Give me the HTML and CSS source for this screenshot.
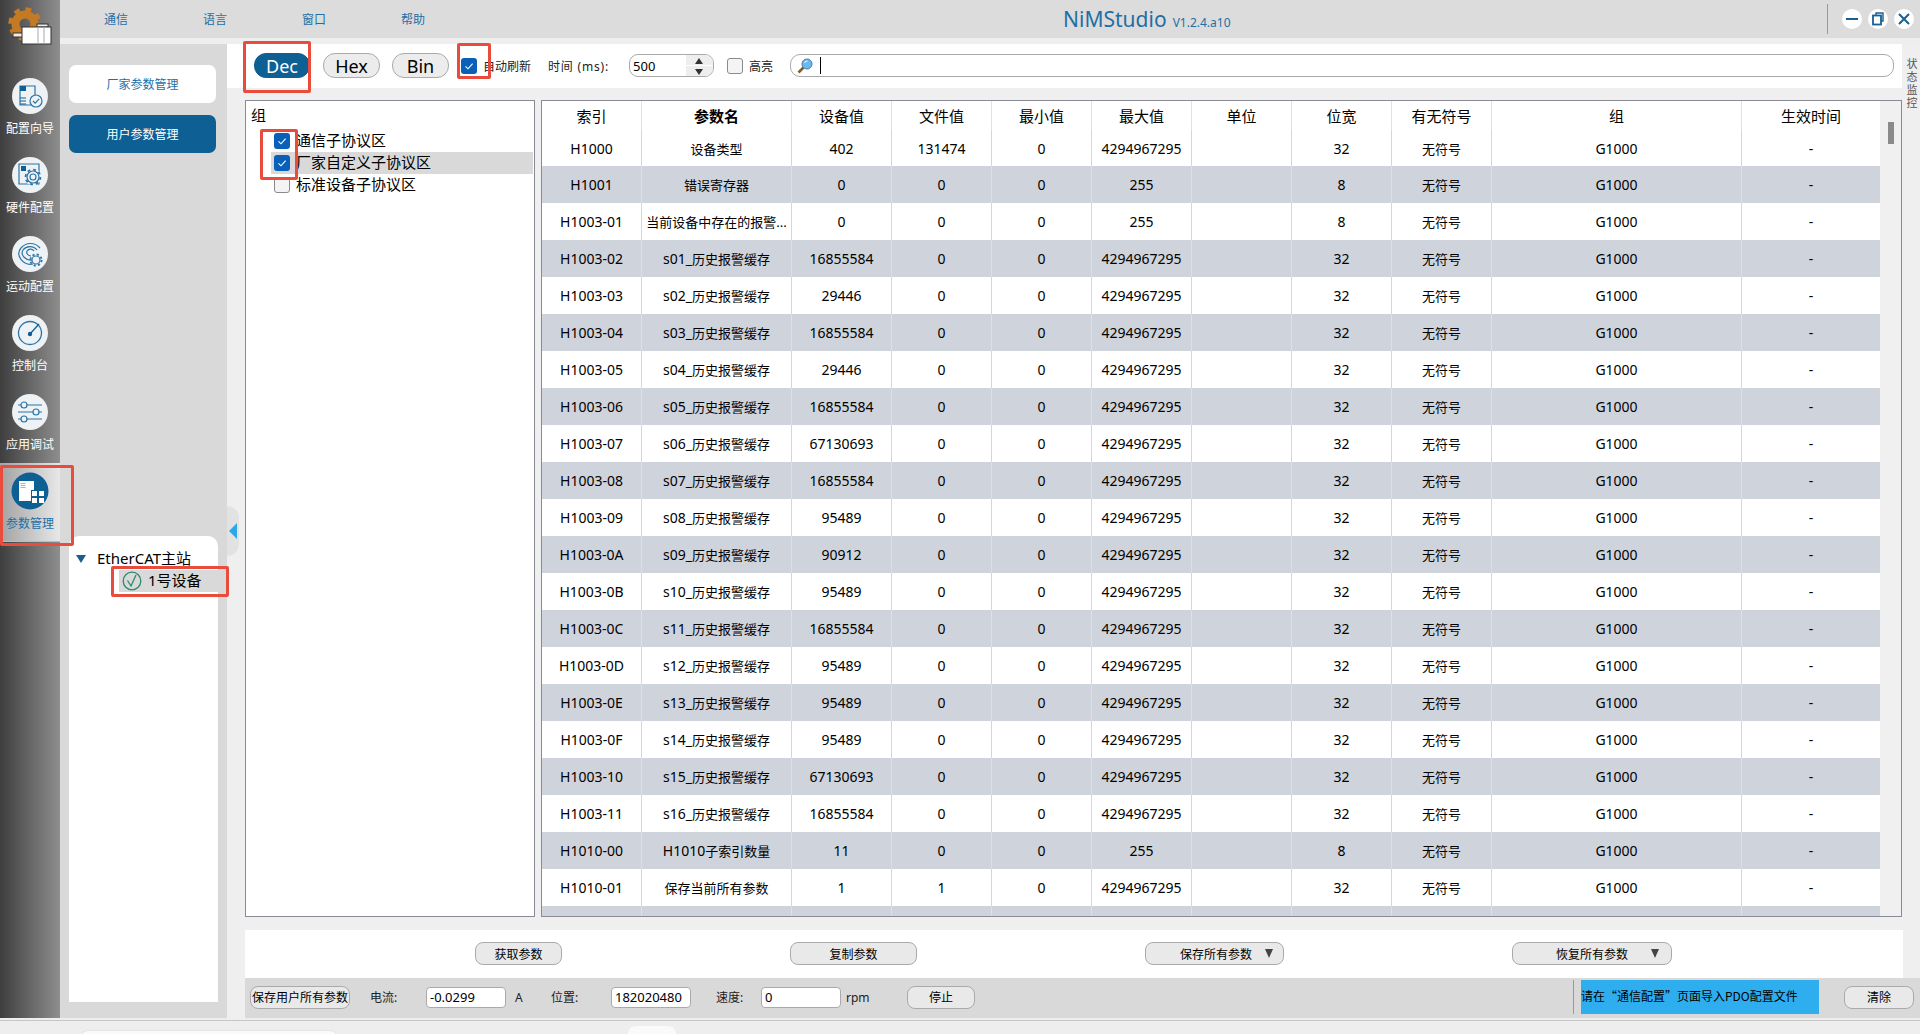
FILE: index.html
```html
<!DOCTYPE html>
<html lang="zh">
<head>
<meta charset="utf-8">
<title>NiMStudio</title>
<link rel="stylesheet" href="styles.css">
</head>
<body>
<svg class="defs" width="0" height="0">
  <symbol id="tick" viewBox="0 0 16 16"><path d="M4.500 8.400 7 10.800 11.600 5.600" fill="none" stroke="#fff" stroke-width="1.100"/></symbol>
</svg>
<div class="app">
  <aside class="side">
    <div class="logo">
      <svg width="60" height="68" viewBox="0 0 60 68">
        <circle cx="25" cy="24" r="9.500" fill="none" stroke="#c47a24" stroke-width="8"/>
        <circle cx="25" cy="24" r="14.500" fill="none" stroke="#c47a24" stroke-width="4.500" stroke-dasharray="5.700 5.700"/>
        <rect x="13" y="33" width="10" height="4" fill="#eee" stroke="#333"/>
        <rect x="37" y="24" width="11" height="3" fill="#eee" stroke="#333"/>
        <rect x="22" y="27" width="29" height="17" fill="#fff" stroke="#333"/>
        <path d="M38 27V44M44 27V44" stroke="#aaa" fill="none"/>
      </svg>
    </div>
    <div class="nav">
      <svg class="nav-ic" viewBox="0 0 36 36"><circle cx="18" cy="18" r="18" fill="#eef2f5"/><path d="M8 8h15v19H8z" fill="none" stroke="#2b74a6" stroke-width="1.200"/><rect x="8" y="8" width="6" height="5" fill="#0e5f93"/><path d="M8 20h6M8 23h6M8 26h6" stroke="#0e5f93"/><circle cx="24" cy="23" r="6" fill="#eef2f5" stroke="#2b74a6" stroke-width="1.200"/><path d="M21 23l2.200 2.200 4-4.400" fill="none" stroke="#2b74a6" stroke-width="1.200"/></svg>
      <span class="nav-tx">配置向导</span>
    </div>
    <div class="nav">
      <svg class="nav-ic" viewBox="0 0 36 36"><circle cx="18" cy="18" r="18" fill="#eef2f5"/><path d="M7 7h20v20H7z" fill="none" stroke="#2b74a6" stroke-width="1.200"/><rect x="9" y="9" width="5" height="5" fill="#0e5f93"/><circle cx="21" cy="20" r="8.500" fill="#eef2f5"/><circle cx="21" cy="20" r="3" fill="none" stroke="#2b74a6" stroke-width="1.200"/><circle cx="21" cy="20" r="6" fill="none" stroke="#2b74a6" stroke-width="1.200"/><circle cx="21" cy="20" r="7.400" fill="none" stroke="#2b74a6" stroke-width="1.800" stroke-dasharray="2.800 3"/></svg>
      <span class="nav-tx">硬件配置</span>
    </div>
    <div class="nav">
      <svg class="nav-ic" viewBox="0 0 36 36"><circle cx="18" cy="18" r="18" fill="#eef2f5"/><path d="M21 28C11 30 3 19 9 12 14 6 23 6 28 12" fill="none" stroke="#2b74a6" stroke-width="1.200"/><path d="M20 24C14 25 8 19 11 14 14 10 21 9 25 14" fill="none" stroke="#2b74a6" stroke-width="1.200"/><path d="M19 20C16 20 14 17 15 15 17 12 21 13 22 15" fill="none" stroke="#2b74a6" stroke-width="1.200"/><circle cx="24" cy="24" r="4" fill="#eef2f5" stroke="#2b74a6" stroke-width="1.200"/><circle cx="24" cy="24" r="5.600" fill="none" stroke="#2b74a6" stroke-width="1.800" stroke-dasharray="2.200 2.200"/></svg>
      <span class="nav-tx">运动配置</span>
    </div>
    <div class="nav">
      <svg class="nav-ic" viewBox="0 0 36 36"><circle cx="18" cy="18" r="18" fill="#eef2f5"/><circle cx="18" cy="18" r="11.500" fill="none" stroke="#2b74a6" stroke-width="1.300"/><circle cx="18" cy="19" r="2.200" fill="#0e5f93"/><path d="M18 19 27 9" stroke="#0e5f93" stroke-width="1.300"/></svg>
      <span class="nav-tx">控制台</span>
    </div>
    <div class="nav">
      <svg class="nav-ic" viewBox="0 0 36 36"><circle cx="18" cy="18" r="18" fill="#eef2f5"/><path d="M6 11h24M6 18h24M6 25h24" stroke="#2b74a6" stroke-width="1.200"/><circle cx="12" cy="11" r="3" fill="#eef2f5" stroke="#2b74a6" stroke-width="1.200"/><circle cx="24" cy="18" r="3" fill="#eef2f5" stroke="#2b74a6" stroke-width="1.200"/><circle cx="12" cy="25" r="3" fill="#eef2f5" stroke="#2b74a6" stroke-width="1.200"/></svg>
      <span class="nav-tx">应用调试</span>
    </div>
    <div class="nav nav-on">
      <svg class="nav-ic" viewBox="0 0 36 36"><circle cx="18" cy="18" r="18.500" fill="#0e5f93"/><path d="M7 8h15v9h-3v11H7z" fill="#fff"/><path d="M8.500 10.500h5M8.500 12.500h5M8.500 14.500h5" stroke="#8fbad6"/><rect x="20" y="18" width="5" height="5" fill="#fff"/><rect x="27" y="18" width="5" height="5" fill="#fff"/><rect x="20" y="25" width="5" height="5" fill="#fff"/><rect x="27" y="25" width="5" height="5" fill="#fff"/></svg>
      <span class="nav-tx">参数管理</span>
    </div>
  </aside>
  <div class="rest">
    <header class="titlebar">
      <nav class="menu"><span>通信</span><span>语言</span><span>窗口</span><span>帮助</span></nav>
      <div class="brand"><span class="brand-name">NiMStudio</span><span class="brand-ver">V1.2.4.a10</span></div>
      <div class="winctl">
        <span class="win-sep"></span>
        <svg class="win-b" viewBox="0 0 20 20"><circle cx="10" cy="10" r="10" fill="#fff"/><path d="M4 10h12" stroke="#1a5f90" stroke-width="2"/></svg>
        <svg class="win-b" viewBox="0 0 20 20"><circle cx="10" cy="10" r="10" fill="#fff"/><path d="M8 6V4h7v8h-2" fill="none" stroke="#1a5f90" stroke-width="1.400"/><rect x="5" y="6.500" width="8" height="9" fill="none" stroke="#1a5f90" stroke-width="1.800"/></svg>
        <svg class="win-b" viewBox="0 0 20 20"><circle cx="10" cy="10" r="10" fill="#fff"/><path d="M5 5l10 10M15 5 5 15" stroke="#1a5f90" stroke-width="2"/></svg>
      </div>
    </header>
    <div class="body">
      <section class="col2">
        <div class="mode mode-light">厂家参数管理</div>
        <div class="mode mode-on">用户参数管理</div>
        <div class="handle"><span class="handle-arrow"></span></div>
        <div class="devtree">
          <div class="dev-root"><span class="dev-caret"></span><span class="up">EtherCAT主站</span></div>
          <div class="dev-item">
            <svg width="20" height="20" viewBox="0 0 20 20"><circle cx="10" cy="10" r="8.800" fill="none" stroke="#2a8a6a" stroke-width="1.300"/><path d="M5.500 9.500 9 15 14 4" fill="none" stroke="#2a8a6a" stroke-width="1.300"/></svg>
            <span class="up">1号设备</span>
          </div>
        </div>
      </section>
      <main class="main">
        <div class="toolbar">
          <button class="pill pill-on">Dec</button>
          <button class="pill">Hex</button>
          <button class="pill">Bin</button>
          <span class="cb cb-on tb-auto"><svg width="16" height="16"><use href="#tick"/></svg></span>
          <span class="tb-lbl lbl-auto">自动刷新</span>
          <span class="tb-lbl lbl-time">时间 (ms):</span>
          <div class="spin">
            <span class="spin-val">500</span>
            <span class="spin-btns"><span class="spin-up"></span><span class="spin-dn"></span></span>
          </div>
          <span class="cb tb-hi"></span>
          <span class="tb-lbl lbl-hi">高亮</span>
          <div class="search">
            <svg width="16" height="16" viewBox="0 0 16 16"><path d="M6.500 9.500 1.500 14.500" stroke="#8a5a24" stroke-width="2.600"/><circle cx="10" cy="6" r="5" fill="#6db9ee" stroke="#3d7fb0"/><path d="M7.500 5a3 3 0 0 1 3-2" fill="none" stroke="#fff"/></svg>
            <span class="caret"></span>
          </div>
        </div>
        <div class="content">
          <div class="tree">
            <div class="tree-head">组</div>
            <div class="tree-row"><span class="cb cb-on"><svg width="16" height="16"><use href="#tick"/></svg></span><span class="up">通信子协议区</span></div>
            <div class="tree-row tree-row-on"><span class="cb cb-on"><svg width="16" height="16"><use href="#tick"/></svg></span><span class="up">厂家自定义子协议区</span></div>
            <div class="tree-row"><span class="cb"></span><span class="up">标准设备子协议区</span></div>
          </div>
          <div class="grid-wrap">
            <div class="grid-clip">
            <table class="grid">
              <colgroup><col class="c100"><col class="c150"><col class="c100"><col class="c100"><col class="c100"><col class="c100"><col class="c100"><col class="c100"><col class="c100"><col class="c250"><col class="c138"></colgroup>
              <thead><tr><th>索引</th><th class="th-b">参数名</th><th>设备值</th><th>文件值</th><th>最小值</th><th>最大值</th><th>单位</th><th>位宽</th><th>有无符号</th><th>组</th><th>生效时间</th></tr></thead>
              <tbody>
                <tr><td>H1000</td><td class="cn">设备类型</td><td>402</td><td>131474</td><td>0</td><td>4294967295</td><td></td><td>32</td><td class="cn">无符号</td><td>G1000</td><td>-</td></tr>
                <tr><td>H1001</td><td class="cn">错误寄存器</td><td>0</td><td>0</td><td>0</td><td>255</td><td></td><td>8</td><td class="cn">无符号</td><td>G1000</td><td>-</td></tr>
                <tr><td>H1003-01</td><td class="cn">当前设备中存在的报警...</td><td>0</td><td>0</td><td>0</td><td>255</td><td></td><td>8</td><td class="cn">无符号</td><td>G1000</td><td>-</td></tr>
                <tr><td>H1003-02</td><td class="cn"><span class="la">s01_</span>历史报警缓存</td><td>16855584</td><td>0</td><td>0</td><td>4294967295</td><td></td><td>32</td><td class="cn">无符号</td><td>G1000</td><td>-</td></tr>
                <tr><td>H1003-03</td><td class="cn"><span class="la">s02_</span>历史报警缓存</td><td>29446</td><td>0</td><td>0</td><td>4294967295</td><td></td><td>32</td><td class="cn">无符号</td><td>G1000</td><td>-</td></tr>
                <tr><td>H1003-04</td><td class="cn"><span class="la">s03_</span>历史报警缓存</td><td>16855584</td><td>0</td><td>0</td><td>4294967295</td><td></td><td>32</td><td class="cn">无符号</td><td>G1000</td><td>-</td></tr>
                <tr><td>H1003-05</td><td class="cn"><span class="la">s04_</span>历史报警缓存</td><td>29446</td><td>0</td><td>0</td><td>4294967295</td><td></td><td>32</td><td class="cn">无符号</td><td>G1000</td><td>-</td></tr>
                <tr><td>H1003-06</td><td class="cn"><span class="la">s05_</span>历史报警缓存</td><td>16855584</td><td>0</td><td>0</td><td>4294967295</td><td></td><td>32</td><td class="cn">无符号</td><td>G1000</td><td>-</td></tr>
                <tr><td>H1003-07</td><td class="cn"><span class="la">s06_</span>历史报警缓存</td><td>67130693</td><td>0</td><td>0</td><td>4294967295</td><td></td><td>32</td><td class="cn">无符号</td><td>G1000</td><td>-</td></tr>
                <tr><td>H1003-08</td><td class="cn"><span class="la">s07_</span>历史报警缓存</td><td>16855584</td><td>0</td><td>0</td><td>4294967295</td><td></td><td>32</td><td class="cn">无符号</td><td>G1000</td><td>-</td></tr>
                <tr><td>H1003-09</td><td class="cn"><span class="la">s08_</span>历史报警缓存</td><td>95489</td><td>0</td><td>0</td><td>4294967295</td><td></td><td>32</td><td class="cn">无符号</td><td>G1000</td><td>-</td></tr>
                <tr><td>H1003-0A</td><td class="cn"><span class="la">s09_</span>历史报警缓存</td><td>90912</td><td>0</td><td>0</td><td>4294967295</td><td></td><td>32</td><td class="cn">无符号</td><td>G1000</td><td>-</td></tr>
                <tr><td>H1003-0B</td><td class="cn"><span class="la">s10_</span>历史报警缓存</td><td>95489</td><td>0</td><td>0</td><td>4294967295</td><td></td><td>32</td><td class="cn">无符号</td><td>G1000</td><td>-</td></tr>
                <tr><td>H1003-0C</td><td class="cn"><span class="la">s11_</span>历史报警缓存</td><td>16855584</td><td>0</td><td>0</td><td>4294967295</td><td></td><td>32</td><td class="cn">无符号</td><td>G1000</td><td>-</td></tr>
                <tr><td>H1003-0D</td><td class="cn"><span class="la">s12_</span>历史报警缓存</td><td>95489</td><td>0</td><td>0</td><td>4294967295</td><td></td><td>32</td><td class="cn">无符号</td><td>G1000</td><td>-</td></tr>
                <tr><td>H1003-0E</td><td class="cn"><span class="la">s13_</span>历史报警缓存</td><td>95489</td><td>0</td><td>0</td><td>4294967295</td><td></td><td>32</td><td class="cn">无符号</td><td>G1000</td><td>-</td></tr>
                <tr><td>H1003-0F</td><td class="cn"><span class="la">s14_</span>历史报警缓存</td><td>95489</td><td>0</td><td>0</td><td>4294967295</td><td></td><td>32</td><td class="cn">无符号</td><td>G1000</td><td>-</td></tr>
                <tr><td>H1003-10</td><td class="cn"><span class="la">s15_</span>历史报警缓存</td><td>67130693</td><td>0</td><td>0</td><td>4294967295</td><td></td><td>32</td><td class="cn">无符号</td><td>G1000</td><td>-</td></tr>
                <tr><td>H1003-11</td><td class="cn"><span class="la">s16_</span>历史报警缓存</td><td>16855584</td><td>0</td><td>0</td><td>4294967295</td><td></td><td>32</td><td class="cn">无符号</td><td>G1000</td><td>-</td></tr>
                <tr><td>H1010-00</td><td class="cn"><span class="la">H1010</span>子索引数量</td><td>11</td><td>0</td><td>0</td><td>255</td><td></td><td>8</td><td class="cn">无符号</td><td>G1000</td><td>-</td></tr>
                <tr><td>H1010-01</td><td class="cn">保存当前所有参数</td><td>1</td><td>1</td><td>0</td><td>4294967295</td><td></td><td>32</td><td class="cn">无符号</td><td>G1000</td><td>-</td></tr>
                <tr><td></td><td></td><td></td><td></td><td></td><td></td><td></td><td></td><td></td><td></td><td></td></tr>
              </tbody>
            </table>
            </div>
            <div class="vbar"><span class="vthumb"></span></div>
          </div>
        </div>
        <div class="actions">
          <button class="btn w-get">获取参数</button>
          <button class="btn w-copy">复制参数</button>
          <button class="btn btn-drop w-save"><span>保存所有参数</span><i class="drop"></i></button>
          <button class="btn btn-drop w-rest"><span>恢复所有参数</span><i class="drop"></i></button>
        </div>
        <div class="status">
          <button class="btn st-save">保存用户所有参数</button>
          <span class="st-l w56">电流:</span><input class="st-in" value="-0.0299" readonly><span class="st-u w36">A</span>
          <span class="st-l w60">位置:</span><input class="st-in" value="182020480" readonly>
          <span class="st-l w45">速度:</span><input class="st-in" value="0" readonly><span class="st-u w61">rpm</span>
          <button class="btn st-stop">停止</button>
          <span class="st-sep"></span>
          <div class="st-msg">请在“通信配置”页面导入PDO配置文件</div>
          <button class="btn st-clear">清除</button>
        </div>
        <div class="rail">状态监控</div>
      </main>
    </div>
  </div>
</div>
<footer class="foot"><span class="tab tab-a"></span><span class="tab tab-b"></span></footer>
<span class="mark m-side"></span>
<span class="mark m-dev"></span>
<span class="mark m-dec"></span>
<span class="mark m-auto"></span>
<span class="mark m-tree"></span>
</body>
</html>
```
FILE: styles.css
```css
* { box-sizing: border-box; }
html, body { margin: 0; padding: 0; }
html { height: 1034px; overflow: hidden; }
body {
  width: 1920px; height: 1034px; overflow: hidden; position: relative;
  background: #eeeeee; color: #000;
  font-family: "Noto Sans", "Noto Sans CJK SC", sans-serif; font-size: 12px;
}
.defs { position: absolute; }
button { font-family: inherit; margin: 0; padding: 0; color: #000; }
.up { padding-bottom: 2px; line-height: 20px; }

.app { display: flex; height: 1018px; }
.side { width: 60px; flex: none; background: linear-gradient(90deg, #3e3e3e, #8e8e8e); }
.logo { height: 68px; }
.logo svg { display: block; }
.nav { height: 79px; padding-top: 10px; display: flex; flex-direction: column; align-items: center; }
.nav-ic { width: 36px; height: 36px; display: block; overflow: visible; flex: none; }
.nav-tx { margin-top: 7px; line-height: 16px; font-size: 12px; color: #fff; }
.nav-on { background: linear-gradient(90deg, #a2a2a2, #e8e8e8); border-bottom: 1px solid #bbb; }
.nav-on .nav-tx { color: #1f6fa5; }

.rest { flex: 1; display: flex; flex-direction: column; min-width: 0; }
.titlebar { height: 38px; flex: none; background: #dcdcdc; display: flex; align-items: center; padding-left: 44px; }
.menu { display: flex; gap: 75px; color: #1f6fa5; font-size: 12px; }
.brand { margin-left: 638px; display: flex; align-items: baseline; gap: 6px; color: #1f6fa5; }
.brand-name { font-size: 21px; line-height: 28px; }
.brand-ver { font-size: 12px; }
.winctl { margin-left: auto; display: flex; align-items: center; gap: 6px; padding-right: 6px; }
.win-sep { width: 1px; height: 30px; background: #9a9a9a; margin-right: 8px; }
.win-b { width: 20px; height: 20px; display: block; }

.body { flex: 1; display: flex; min-height: 0; margin-top: 6px; background: #efefef; }

.col2 { width: 167px; flex: none; background: #d9d9d9; padding: 21px 9px 16px; position: relative; display: flex; flex-direction: column; }
.mode { width: 147px; height: 38px; border-radius: 7px; display: flex; align-items: center; justify-content: center; font-size: 12px; flex: none; }
.mode-light { background: #fff; color: #1f6fa5; }
.mode-on { background: #0e5f93; color: #fff; margin-top: 12px; }
.handle { position: absolute; left: 100%; top: 462px; width: 12px; height: 50px; background: #e2e2e2; border-radius: 0 12px 12px 0; display: flex; align-items: center; padding-left: 2px; }
.handle-arrow { width: 0; height: 0; border-style: solid; border-width: 8.500px 8px 8.500px 0; border-color: transparent #2aa8e8 transparent transparent; }
.devtree { margin-top: auto; width: 149px; height: 466px; background: #fff; border-radius: 10px 10px 0 0; padding-top: 12px; font-size: 15px; }
.dev-root { height: 22px; padding-left: 7px; display: flex; align-items: center; white-space: nowrap; }
.dev-caret { width: 0; height: 0; border-style: solid; border-width: 8px 5px 0 5px; border-color: #1a5f90 transparent transparent transparent; margin-right: 11px; }
.dev-item { margin-left: 50px; height: 22px; background: #d9d9d9; display: flex; align-items: center; padding-left: 3px; gap: 6px; }
.dev-item svg { display: block; }

.main { flex: 1; min-width: 0; display: flex; flex-direction: column; position: relative; }
.toolbar { width: 1675px; height: 44px; flex: none; background: #fff; display: flex; align-items: center; padding: 0 0 1px 27px; }
.pill { width: 57px; height: 25px; border-radius: 12px; border: 1px solid #aaa; background: #ececec; font-size: 18px; line-height: 22px; margin-right: 12px; flex: none; }
.pill-on { width: 56px; background: #0e5f93; border-color: #0e5f93; color: #fff; margin-right: 13px; }
.cb { width: 16px; height: 16px; border-radius: 3px; border: 1px solid #8a8a8a; background: #f4f4f4; flex: none; display: block; }
.cb svg { display: block; }
.cb-on { border: 0; background: #0a60b8; }
.tb-lbl { font-size: 12px; white-space: nowrap; color: #222; }
.lbl-auto { margin-left: 6px; }
.lbl-time { margin-left: 17px; width: 81px; letter-spacing: 0.8px; }
.lbl-hi { margin-left: 6px; }
.spin { width: 85px; height: 23px; border: 1px solid #aaa; border-radius: 9px; display: flex; align-items: center; justify-content: space-between; padding-left: 3px; overflow: hidden; flex: none; }
.spin-val { font-size: 13px; }
.spin-btns { width: 27px; height: 100%; display: flex; flex-direction: column; background: #eeeeee; }
.spin-up, .spin-dn { flex: 1; position: relative; }
.spin-up { border-bottom: 1px solid #fff; }
.spin-up::after, .spin-dn::after { content: ""; position: absolute; left: 9px; top: 3px; border-style: solid; border-color: transparent; }
.spin-up::after { border-width: 0 4px 6px 4px; border-bottom-color: #333; }
.spin-dn::after { border-width: 6px 4px 0 4px; border-top-color: #333; }
.tb-hi { margin-left: 13px; }
.search { width: 1104px; height: 23px; margin-left: 17px; border: 1px solid #aaa; border-radius: 10px; display: flex; align-items: center; padding-left: 6px; flex: none; }
.search svg { display: block; }
.caret { width: 1px; height: 17px; background: #000; margin-left: 7px; }

.content { margin: 12px 0 0 18px; height: 817px; flex: none; display: flex; gap: 6px; }
.tree { width: 290px; background: #fff; border: 1px solid #8a8a96; font-size: 15px; }
.tree-head { height: 29px; line-height: 28px; padding-left: 5px; }
.tree-row { height: 22px; margin-left: 25px; margin-right: 1px; display: flex; align-items: center; gap: 6px; padding-left: 3px; white-space: nowrap; }
.tree-row-on { background: #d9d9d9; }
.grid-wrap { width: 1361px; border: 1px solid #8a8a96; display: flex; background: #f0f0f0; overflow: hidden; }
.grid-clip { width: 1338px; height: 100%; overflow: hidden; flex: none; background: #fff; }
.grid { width: 1338px; table-layout: fixed; border-collapse: separate; border-spacing: 0; }
.c100 { width: 100px; } .c150 { width: 150px; } .c250 { width: 250px; } .c138 { width: 138px; }
.grid th { height: 29px; padding: 0; font-size: 15px; font-weight: normal; border-right: 1px solid #e2e2e2; text-align: center; line-height: 28px; }
.grid th.th-b { font-weight: bold; }
.grid td { height: 37px; padding: 0 2px; font-size: 14px; text-align: center; border-right: 1px solid #d6d6d6; white-space: nowrap; overflow: hidden; }
.grid th:last-child, .grid td:last-child { border-right: 0; }
.grid tbody tr:first-child td { height: 36px; }
.grid tbody tr:nth-child(even) td { background: #cfd3dc; border-right-color: #dcdfe4; }
.grid td.cn { font-size: 13px; }
.grid td .la { font-size: 14px; }
.vbar { flex: 1; position: relative; }
.vthumb { position: absolute; left: 8px; top: 21px; width: 6px; height: 22px; background: #8a8a8a; }

.actions { width: 1658px; height: 48px; flex: none; margin: 13px 0 0 18px; background: #fff; display: flex; align-items: center; gap: 228px; padding: 0 0 1px 230px; }
.btn { height: 23px; border: 1px solid #aaa; border-radius: 8px; background: #e9e9e9; font-size: 12px; flex: none; white-space: nowrap; }
.w-get { width: 87px; } .w-copy { width: 127px; } .w-save { width: 139px; } .w-rest { width: 160px; }
.btn-drop { display: flex; align-items: center; justify-content: flex-end; }
.drop { width: 0; height: 0; border-style: solid; border-width: 9px 4.500px 0 4.500px; border-color: #444 transparent transparent transparent; margin-left: 13px; margin-right: 10px; }
.w-rest .drop { margin-left: 23px; margin-right: 12px; }

.status { flex: 1; margin-left: 18px; background: #d9d9d9; display: flex; align-items: center; padding: 0 6px 2px 5px; }
.st-save { width: 100px; overflow: hidden; font-size: 12px; }
.st-l { flex: none; font-size: 12px; color: #222; }
.w56 { width: 56px; margin-left: 20px; }
.w60 { width: 60px; }
.w45 { width: 45px; margin-left: 25px; }
.st-in { width: 80px; height: 21px; padding: 0 3px; border: 1px solid #aaa; border-radius: 4px; background: #fff; font: 13px "Noto Sans", sans-serif; color: #000; flex: none; outline: 0; }
.st-u { flex: none; font-size: 12px; color: #222; padding-left: 9px; }
.w36 { width: 45px; }
.w61 { width: 66px; padding-left: 5px; }
.st-stop { width: 68px; }
.st-sep { width: 1px; height: 34px; background: #999; margin-left: auto; }
.st-msg { width: 238px; height: 34px; margin-left: 7px; background: #2eaeee; line-height: 31px; font-family: "Noto Sans CJK SC", sans-serif; font-size: 12px; white-space: nowrap; overflow: hidden; }
.st-clear { width: 70px; margin-left: 25px; }

.rail { position: absolute; right: 2px; top: 14px; writing-mode: vertical-rl; white-space: nowrap; font-size: 11px; letter-spacing: 2px; line-height: 14px; color: #555; }

.foot { height: 14px; margin-top: 2px; border-top: 1px solid #c6c6c6; position: relative; overflow: hidden; }
.tab { position: absolute; background: #fafafa; border-radius: 8px 8px 0 0; }
.tab-a { left: 80px; top: 9px; width: 258px; height: 20px; border: 1px solid #e4e4e4; }
.tab-b { left: 628px; top: 5px; width: 48px; height: 20px; }

.mark { position: absolute; border: 3px solid #e94b3c; border-radius: 2px; pointer-events: none; }
.m-side { left: 0; top: 465px; width: 74px; height: 81px; }
.m-dev { left: 111px; top: 566px; width: 118px; height: 31px; }
.m-dec { left: 243px; top: 41px; width: 68px; height: 52px; }
.m-auto { left: 457px; top: 43px; width: 34px; height: 36px; }
.m-tree { left: 260px; top: 129px; width: 38px; height: 51px; }
```
